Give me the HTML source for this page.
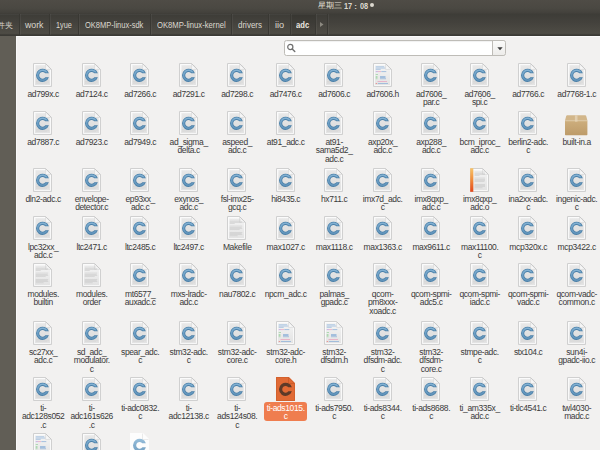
<!DOCTYPE html>
<html><head><meta charset="utf-8"><style>
html,body{margin:0;padding:0;}
body{width:600px;height:450px;overflow:hidden;position:relative;background:#f2f1f0;font-family:"Liberation Sans",sans-serif;}
#top{position:absolute;left:0;top:0;width:600px;height:14px;background:linear-gradient(#4f4c46,#4a4842 60%,#43413c 90%,#3e3d38);}
.ck{position:absolute;color:#dcd8cf;white-space:nowrap;line-height:11px;font-weight:bold;transform-origin:0 0}
#dot{position:absolute;left:369.7px;top:2.9px;width:4.5px;height:4.5px;border-radius:50%;background:#dcd8cf}
#hdr{position:absolute;left:0;top:14px;width:600px;height:22px;background:linear-gradient(#3d3c37,#44423d 40%,#4e4c45 88%,#3b3a35 95%,#3b3a35);}
.sp{position:absolute;top:14px;height:20.5px;width:1px;background:#393833}
.sl{position:absolute;top:14px;height:20.5px;width:1px;background:rgba(255,255,255,0.05)}
.bt{position:absolute;top:19.7px;line-height:11px;font-size:8.2px;color:#dcd8cf;white-space:nowrap;transform-origin:0 0;}
#side{position:absolute;left:0;top:36px;width:15.5px;height:414px;background:#615e56;}
#sideb{position:absolute;left:16px;top:36px;width:1px;height:414px;background:#f8f8f8;}
#content{position:absolute;left:16px;top:36px;width:584px;height:414px;background:#f2f1f0;}
#search{position:absolute;left:284.2px;top:39.8px;width:221.3px;height:16.6px;box-sizing:border-box;border:1px solid #bebcb7;border-radius:2.5px;background:#fff;box-shadow:inset 0 1px 1px rgba(0,0,0,0.06)}
#drop{position:absolute;left:491.5px;top:39.8px;width:14px;height:16.6px;box-sizing:border-box;border:1px solid #bebcb7;border-radius:0 2.5px 2.5px 0;background:linear-gradient(#fbfbfa,#edecea);}
.ic{position:absolute;width:19px;height:24px;}
.ic svg{display:block}
.lb{position:absolute;width:60px;text-align:center;font-size:8.5px;line-height:8.7px;color:#3a3a3a;white-space:nowrap;letter-spacing:-0.38px}
.lb .sel{display:inline-block;color:#fff;background:#ef7d4f;border-radius:3px;padding:2.05px 2.5px 0 2.5px;margin-top:-2.05px}
</style></head><body>

<svg width="0" height="0" style="position:absolute">
<defs>
 <linearGradient id="pg" x1="0" y1="0" x2="0" y2="1">
  <stop offset="0" stop-color="#f5f5f5"/><stop offset="1" stop-color="#e2e2e2"/>
 </linearGradient>
 <linearGradient id="pin" x1="0" y1="0" x2="0" y2="1">
  <stop offset="0" stop-color="#e8e8e8"/><stop offset="1" stop-color="#dcdcdc"/>
 </linearGradient>
 <linearGradient id="cg" x1="0" y1="0" x2="0" y2="1">
  <stop offset="0" stop-color="#86b4d5"/><stop offset="0.5" stop-color="#6d9fc5"/><stop offset="1" stop-color="#6093ba"/>
 </linearGradient>
 <linearGradient id="og" x1="0" y1="0" x2="0" y2="1">
  <stop offset="0" stop-color="#f7c46a"/><stop offset="0.5" stop-color="#f08a3a"/><stop offset="1" stop-color="#e4461a"/>
 </linearGradient>
 <linearGradient id="bx" x1="0" y1="0" x2="0" y2="1">
  <stop offset="0" stop-color="#cdae7d"/><stop offset="1" stop-color="#bd9b69"/>
 </linearGradient>
 <g id="page">
  <path d="M0.5,0.5 H12.5 L18.5,6.5 V23.5 H0.5 Z" fill="url(#pg)" stroke="#d0d0d0" stroke-width="1"/>
  <path d="M1.5,1.5 H12 L17.5,7 V22.5 H1.5 Z" fill="none" stroke="#fdfdfd" stroke-width="0.8"/>
  <path d="M12.5,0.5 V6.5 H18.5 Z" fill="#f0f0f0" stroke="#dedede" stroke-width="0.8"/><path d="M12.5,0.5 L18.5,6.5" stroke="#c6c6c6" stroke-width="0.9"/><path d="M13.6,3.2 L15.5,5.4 H13.6 Z" fill="#fcfcfc"/>
 </g>
 <g id="cic">
  <use href="#page"/>
  <rect x="2.8" y="2.3" width="13.5" height="18.2" fill="url(#pin)"/>
  <path d="M12.5,0.5 V6.5 H18.5 Z" fill="#f0f0f0" stroke="#dedede" stroke-width="0.8"/><path d="M12.5,0.5 L18.5,6.5" stroke="#c6c6c6" stroke-width="0.9"/><path d="M13.6,3.2 L15.5,5.4 H13.6 Z" fill="#fcfcfc"/>
  <g stroke="#d2d2d2" stroke-width="0.5"><path d="M3,16.5 H14 M3,18.5 H13 M3,20.3 H14"/></g>
  <path d="M15.89,10.30 A6.6,6.6 0 1 0 15.89,14.30 L12.35,14.30 A3.4,3.4 0 1 1 12.35,10.30 Z" fill="#497fa8"/><path d="M14.73,9.60 A5.8,5.8 0 1 0 14.73,15.00 L12.82,15.00 A4.2,4.2 0 1 1 12.82,9.60 Z" fill="url(#cg)"/>
 </g>
</defs>
</svg>
<div id="top"></div>
<div class="ck" style="left:317.8px;top:0.4px;font-size:7.6px;font-weight:500;color:#e6e2d9">星期三</div><div class="ck" style="left:343.7px;top:0.8px;font-size:8.4px;transform:scaleX(0.88)">17</div><div class="ck" style="left:354.3px;top:0.6px;font-size:8px">:</div><div class="ck" style="left:359.5px;top:0.8px;font-size:8.4px;transform:scaleX(0.88)">08</div><div id="dot"></div>
<div id="hdr"></div>
<div style="position:absolute;left:290.6px;top:14px;width:24.8px;height:20.5px;background:rgba(0,0,0,0.09)"></div>
<div style="position:absolute;left:0;top:14px;width:327.5px;height:1px;background:rgba(255,255,255,0.035)"></div>
<div class="sp" style="left:18.8px"></div><div class="sl" style="left:19.8px"></div>
<div class="sp" style="left:49.1px"></div><div class="sl" style="left:50.1px"></div>
<div class="sp" style="left:77.5px"></div><div class="sl" style="left:78.5px"></div>
<div class="sp" style="left:149.9px"></div><div class="sl" style="left:150.9px"></div>
<div class="sp" style="left:230.9px"></div><div class="sl" style="left:231.9px"></div>
<div class="sp" style="left:268.1px"></div><div class="sl" style="left:269.1px"></div>
<div class="sp" style="left:290.1px"></div><div class="sl" style="left:291.1px"></div>
<div class="sp" style="left:314.9px"></div><div class="sl" style="left:315.9px"></div>
<div class="sp" style="left:326.5px"></div><div class="sl" style="left:327.5px"></div>
<div class="bt" style="left:-3.5px;top:20.1px;color:#d4d0c7">件夹</div>
<div class="bt" style="left:25px;transform:scaleX(1.07)">work</div>
<div class="bt" style="left:56px;transform:scaleX(0.89)">1yue</div>
<div class="bt" style="left:85px;transform:scaleX(0.916)">OK8MP-linux-sdk</div>
<div class="bt" style="left:156.6px;transform:scaleX(0.937)">OK8MP-linux-kernel</div>
<div class="bt" style="left:238px;transform:scaleX(0.976)">drivers</div>
<div class="bt" style="left:274.6px;transform:scaleX(1.12)">iio</div>
<div class="bt" style="left:296px;transform:scaleX(0.93);font-weight:bold;color:#eeeae2">adc</div>
<svg style="position:absolute;left:320px;top:21.5px" width="4" height="5" viewBox="0 0 4 5"><path d="M0,0 L3.5,2.5 L0,5 Z" fill="#8c8980"/></svg>
<div id="side"></div>
<div id="content"></div><div id="sideb"></div><div style="position:absolute;left:16px;top:36px;width:584px;height:1px;background:#fbfbfb"></div>
<div id="search"></div>
<div id="drop"></div>
<svg style="position:absolute;left:286px;top:43px" width="10" height="10" viewBox="0 0 10 10"><circle cx="4.3" cy="4" r="2.6" fill="none" stroke="#707070" stroke-width="1.2"/><path d="M6.2,6 L8.8,8.6" stroke="#707070" stroke-width="1.4" stroke-linecap="round"/></svg>
<svg style="position:absolute;left:496.5px;top:46.5px" width="6" height="4" viewBox="0 0 6 4"><path d="M0.3,0.3 H5.7 L3,3.3 Z" fill="#3c3c3c"/></svg>
<div class="ic" style="left:33.40px;top:63px"><svg width="19" height="24" viewBox="0 0 19 24"><use href="#cic"/></svg></div><div class="lb" style="left:13.20px;top:89.75px">ad799x.c</div><div class="ic" style="left:81.90px;top:63px"><svg width="19" height="24" viewBox="0 0 19 24"><use href="#cic"/></svg></div><div class="lb" style="left:61.70px;top:89.75px">ad7124.c</div><div class="ic" style="left:130.40px;top:63px"><svg width="19" height="24" viewBox="0 0 19 24"><use href="#cic"/></svg></div><div class="lb" style="left:110.20px;top:89.75px">ad7266.c</div><div class="ic" style="left:178.90px;top:63px"><svg width="19" height="24" viewBox="0 0 19 24"><use href="#cic"/></svg></div><div class="lb" style="left:158.70px;top:89.75px">ad7291.c</div><div class="ic" style="left:227.40px;top:63px"><svg width="19" height="24" viewBox="0 0 19 24"><use href="#cic"/></svg></div><div class="lb" style="left:207.20px;top:89.75px">ad7298.c</div><div class="ic" style="left:275.90px;top:63px"><svg width="19" height="24" viewBox="0 0 19 24"><use href="#cic"/></svg></div><div class="lb" style="left:255.70px;top:89.75px">ad7476.c</div><div class="ic" style="left:324.40px;top:63px"><svg width="19" height="24" viewBox="0 0 19 24"><use href="#cic"/></svg></div><div class="lb" style="left:304.20px;top:89.75px">ad7606.c</div><div class="ic" style="left:372.90px;top:63px"><svg width="19" height="24" viewBox="0 0 19 24"><use href="#page"/><rect x="2.7" y="3.5" width="8.5" height="0.65" fill="#8fb3da"/><rect x="2.7" y="4.7" width="9.5" height="0.65" fill="#8fb3da"/><rect x="2.7" y="5.9" width="5" height="0.65" fill="#8fb3da"/><rect x="2.7" y="8.4" width="2.2" height="0.65" fill="#b894dc"/><rect x="5" y="8.4" width="3" height="0.65" fill="#e99ab8"/><rect x="8.3" y="8.4" width="5" height="0.65" fill="#7ea8d6"/><rect x="2.7" y="11.1" width="2.3" height="0.65" fill="#8fd093"/><rect x="2.7" y="13.1" width="1.8" height="0.65" fill="#8fd093"/><rect x="7" y="13.1" width="5.5" height="0.65" fill="#7ea8d6"/><rect x="2.7" y="14.3" width="1.8" height="0.65" fill="#8fd093"/><rect x="7" y="14.3" width="5.5" height="0.65" fill="#7ea8d6"/><rect x="2.7" y="15.5" width="1.8" height="0.65" fill="#8fd093"/><rect x="7" y="15.5" width="6" height="0.65" fill="#7ea8d6"/><rect x="4.5" y="18" width="9.5" height="0.65" fill="#e99ab8"/><rect x="2.7" y="20.2" width="1.5" height="0.65" fill="#e86a6a"/><rect x="5" y="20.2" width="10" height="0.65" fill="#7ea8d6"/></svg></div><div class="lb" style="left:352.70px;top:89.75px">ad7606.h</div><div class="ic" style="left:421.40px;top:63px"><svg width="19" height="24" viewBox="0 0 19 24"><use href="#cic"/></svg></div><div class="lb" style="left:401.20px;top:89.75px">ad7606_<br>par.c</div><div class="ic" style="left:469.90px;top:63px"><svg width="19" height="24" viewBox="0 0 19 24"><use href="#cic"/></svg></div><div class="lb" style="left:449.70px;top:89.75px">ad7606_<br>spi.c</div><div class="ic" style="left:518.40px;top:63px"><svg width="19" height="24" viewBox="0 0 19 24"><use href="#cic"/></svg></div><div class="lb" style="left:498.20px;top:89.75px">ad7766.c</div><div class="ic" style="left:566.90px;top:63px"><svg width="19" height="24" viewBox="0 0 19 24"><use href="#cic"/></svg></div><div class="lb" style="left:546.70px;top:89.75px">ad7768-1.c</div><div class="ic" style="left:33.40px;top:111px"><svg width="19" height="24" viewBox="0 0 19 24"><use href="#cic"/></svg></div><div class="lb" style="left:13.20px;top:137.75px">ad7887.c</div><div class="ic" style="left:81.90px;top:111px"><svg width="19" height="24" viewBox="0 0 19 24"><use href="#cic"/></svg></div><div class="lb" style="left:61.70px;top:137.75px">ad7923.c</div><div class="ic" style="left:130.40px;top:111px"><svg width="19" height="24" viewBox="0 0 19 24"><use href="#cic"/></svg></div><div class="lb" style="left:110.20px;top:137.75px">ad7949.c</div><div class="ic" style="left:178.90px;top:111px"><svg width="19" height="24" viewBox="0 0 19 24"><use href="#cic"/></svg></div><div class="lb" style="left:158.70px;top:137.75px">ad_sigma_<br>delta.c</div><div class="ic" style="left:227.40px;top:111px"><svg width="19" height="24" viewBox="0 0 19 24"><use href="#cic"/></svg></div><div class="lb" style="left:207.20px;top:137.75px">aspeed_<br>adc.c</div><div class="ic" style="left:275.90px;top:111px"><svg width="19" height="24" viewBox="0 0 19 24"><use href="#cic"/></svg></div><div class="lb" style="left:255.70px;top:137.75px">at91_adc.c</div><div class="ic" style="left:324.40px;top:111px"><svg width="19" height="24" viewBox="0 0 19 24"><use href="#cic"/></svg></div><div class="lb" style="left:304.20px;top:137.75px">at91-<br>sama5d2_<br>adc.c</div><div class="ic" style="left:372.90px;top:111px"><svg width="19" height="24" viewBox="0 0 19 24"><use href="#cic"/></svg></div><div class="lb" style="left:352.70px;top:137.75px">axp20x_<br>adc.c</div><div class="ic" style="left:421.40px;top:111px"><svg width="19" height="24" viewBox="0 0 19 24"><use href="#cic"/></svg></div><div class="lb" style="left:401.20px;top:137.75px">axp288_<br>adc.c</div><div class="ic" style="left:469.90px;top:111px"><svg width="19" height="24" viewBox="0 0 19 24"><use href="#cic"/></svg></div><div class="lb" style="left:449.70px;top:137.75px">bcm_iproc_<br>adc.c</div><div class="ic" style="left:518.40px;top:111px"><svg width="19" height="24" viewBox="0 0 19 24"><use href="#cic"/></svg></div><div class="lb" style="left:498.20px;top:137.75px">berlin2-adc.<br>c</div><div class="ic" style="left:566.90px;top:111px"><svg width="23" height="21" viewBox="0 0 23 21" style="margin-left:-1.9px;margin-top:4.3px"><path d="M0,5.6 H22.4 V19.6 Q22.4,20.2 21.8,20.2 H0.6 Q0,20.2 0,19.6 Z" fill="url(#bx)"/><path d="M2.2,0.2 H20.2 Q20.9,0.2 21.2,0.9 L22.4,5.6 H0 L1.2,0.9 Q1.5,0.2 2.2,0.2 Z" fill="#d2b68a"/><path d="M0.3,5.9 H22.1" stroke="#e1cca6" stroke-width="0.7"/><rect x="9.9" y="0.2" width="2.6" height="6.5" fill="#e6d5b6" opacity="0.8"/></svg></div><div class="lb" style="left:546.70px;top:137.75px">built-in.a</div><div class="ic" style="left:33.40px;top:168px"><svg width="19" height="24" viewBox="0 0 19 24"><use href="#cic"/></svg></div><div class="lb" style="left:13.20px;top:194.75px">dln2-adc.c</div><div class="ic" style="left:81.90px;top:168px"><svg width="19" height="24" viewBox="0 0 19 24"><use href="#cic"/></svg></div><div class="lb" style="left:61.70px;top:194.75px">envelope-<br>detector.c</div><div class="ic" style="left:130.40px;top:168px"><svg width="19" height="24" viewBox="0 0 19 24"><use href="#cic"/></svg></div><div class="lb" style="left:110.20px;top:194.75px">ep93xx_<br>adc.c</div><div class="ic" style="left:178.90px;top:168px"><svg width="19" height="24" viewBox="0 0 19 24"><use href="#cic"/></svg></div><div class="lb" style="left:158.70px;top:194.75px">exynos_<br>adc.c</div><div class="ic" style="left:227.40px;top:168px"><svg width="19" height="24" viewBox="0 0 19 24"><use href="#cic"/></svg></div><div class="lb" style="left:207.20px;top:194.75px">fsl-imx25-<br>gcq.c</div><div class="ic" style="left:275.90px;top:168px"><svg width="19" height="24" viewBox="0 0 19 24"><use href="#cic"/></svg></div><div class="lb" style="left:255.70px;top:194.75px">hi8435.c</div><div class="ic" style="left:324.40px;top:168px"><svg width="19" height="24" viewBox="0 0 19 24"><use href="#cic"/></svg></div><div class="lb" style="left:304.20px;top:194.75px">hx711.c</div><div class="ic" style="left:372.90px;top:168px"><svg width="19" height="24" viewBox="0 0 19 24"><use href="#cic"/></svg></div><div class="lb" style="left:352.70px;top:194.75px">imx7d_adc.<br>c</div><div class="ic" style="left:421.40px;top:168px"><svg width="19" height="24" viewBox="0 0 19 24"><use href="#cic"/></svg></div><div class="lb" style="left:401.20px;top:194.75px">imx8qxp_<br>adc.c</div><div class="ic" style="left:469.90px;top:168px"><svg width="19" height="24" viewBox="0 0 19 24"><use href="#page"/><rect x="4.5" y="3.8" width="10.5" height="0.5" fill="#c4c4c4"/><rect x="4.5" y="5.0" width="10.5" height="0.5" fill="#c4c4c4"/><rect x="4.5" y="6.2" width="10.5" height="0.5" fill="#c4c4c4"/><rect x="4.5" y="7.4" width="5" height="0.5" fill="#c4c4c4"/><rect x="4.5" y="9.8" width="10.5" height="0.5" fill="#c4c4c4"/><rect x="4.5" y="11.0" width="10.5" height="0.5" fill="#c4c4c4"/><rect x="4.5" y="12.2" width="10.5" height="0.5" fill="#c4c4c4"/><rect x="4.5" y="13.4" width="10" height="0.5" fill="#c4c4c4"/><rect x="4.5" y="16.0" width="10.5" height="0.5" fill="#c4c4c4"/><rect x="4.5" y="17.2" width="10.5" height="0.5" fill="#c4c4c4"/><rect x="4.5" y="18.4" width="10.5" height="0.5" fill="#c4c4c4"/><rect x="4.5" y="19.6" width="8" height="0.5" fill="#c4c4c4"/><rect x="0.2" y="0.2" width="3.1" height="23.6" fill="url(#og)"/></svg></div><div class="lb" style="left:449.70px;top:194.75px">imx8qxp_<br>adc.o</div><div class="ic" style="left:518.40px;top:168px"><svg width="19" height="24" viewBox="0 0 19 24"><use href="#cic"/></svg></div><div class="lb" style="left:498.20px;top:194.75px">ina2xx-adc.<br>c</div><div class="ic" style="left:566.90px;top:168px"><svg width="19" height="24" viewBox="0 0 19 24"><use href="#cic"/></svg></div><div class="lb" style="left:546.70px;top:194.75px">ingenic-adc.<br>c</div><div class="ic" style="left:33.40px;top:216px"><svg width="19" height="24" viewBox="0 0 19 24"><use href="#cic"/></svg></div><div class="lb" style="left:13.20px;top:242.75px">lpc32xx_<br>adc.c</div><div class="ic" style="left:81.90px;top:216px"><svg width="19" height="24" viewBox="0 0 19 24"><use href="#cic"/></svg></div><div class="lb" style="left:61.70px;top:242.75px">ltc2471.c</div><div class="ic" style="left:130.40px;top:216px"><svg width="19" height="24" viewBox="0 0 19 24"><use href="#cic"/></svg></div><div class="lb" style="left:110.20px;top:242.75px">ltc2485.c</div><div class="ic" style="left:178.90px;top:216px"><svg width="19" height="24" viewBox="0 0 19 24"><use href="#cic"/></svg></div><div class="lb" style="left:158.70px;top:242.75px">ltc2497.c</div><div class="ic" style="left:227.40px;top:216px"><svg width="19" height="24" viewBox="0 0 19 24"><use href="#page"/><rect x="2.7" y="3.8" width="11.5" height="0.5" fill="#c4c4c4"/><rect x="2.7" y="5.0" width="12.5" height="0.5" fill="#c4c4c4"/><rect x="2.7" y="6.2" width="12" height="0.5" fill="#c4c4c4"/><rect x="2.7" y="7.4" width="5" height="0.5" fill="#c4c4c4"/><rect x="2.7" y="9.8" width="12.5" height="0.5" fill="#c4c4c4"/><rect x="2.7" y="11.0" width="12" height="0.5" fill="#c4c4c4"/><rect x="2.7" y="12.2" width="12.5" height="0.5" fill="#c4c4c4"/><rect x="2.7" y="13.4" width="10" height="0.5" fill="#c4c4c4"/><rect x="2.7" y="16.0" width="12.5" height="0.5" fill="#c4c4c4"/><rect x="2.7" y="17.2" width="12" height="0.5" fill="#c4c4c4"/><rect x="2.7" y="18.4" width="12.5" height="0.5" fill="#c4c4c4"/><rect x="2.7" y="19.6" width="8" height="0.5" fill="#c4c4c4"/></svg></div><div class="lb" style="left:207.20px;top:242.75px">Makefile</div><div class="ic" style="left:275.90px;top:216px"><svg width="19" height="24" viewBox="0 0 19 24"><use href="#cic"/></svg></div><div class="lb" style="left:255.70px;top:242.75px">max1027.c</div><div class="ic" style="left:324.40px;top:216px"><svg width="19" height="24" viewBox="0 0 19 24"><use href="#cic"/></svg></div><div class="lb" style="left:304.20px;top:242.75px">max1118.c</div><div class="ic" style="left:372.90px;top:216px"><svg width="19" height="24" viewBox="0 0 19 24"><use href="#cic"/></svg></div><div class="lb" style="left:352.70px;top:242.75px">max1363.c</div><div class="ic" style="left:421.40px;top:216px"><svg width="19" height="24" viewBox="0 0 19 24"><use href="#cic"/></svg></div><div class="lb" style="left:401.20px;top:242.75px">max9611.c</div><div class="ic" style="left:469.90px;top:216px"><svg width="19" height="24" viewBox="0 0 19 24"><use href="#cic"/></svg></div><div class="lb" style="left:449.70px;top:242.75px">max11100.<br>c</div><div class="ic" style="left:518.40px;top:216px"><svg width="19" height="24" viewBox="0 0 19 24"><use href="#cic"/></svg></div><div class="lb" style="left:498.20px;top:242.75px">mcp320x.c</div><div class="ic" style="left:566.90px;top:216px"><svg width="19" height="24" viewBox="0 0 19 24"><use href="#cic"/></svg></div><div class="lb" style="left:546.70px;top:242.75px">mcp3422.c</div><div class="ic" style="left:33.40px;top:263px"><svg width="19" height="24" viewBox="0 0 19 24"><use href="#page"/><rect x="2.7" y="3.8" width="11.5" height="0.5" fill="#c4c4c4"/><rect x="2.7" y="5.0" width="12.5" height="0.5" fill="#c4c4c4"/><rect x="2.7" y="6.2" width="12" height="0.5" fill="#c4c4c4"/><rect x="2.7" y="7.4" width="5" height="0.5" fill="#c4c4c4"/><rect x="2.7" y="9.8" width="12.5" height="0.5" fill="#c4c4c4"/><rect x="2.7" y="11.0" width="12" height="0.5" fill="#c4c4c4"/><rect x="2.7" y="12.2" width="12.5" height="0.5" fill="#c4c4c4"/><rect x="2.7" y="13.4" width="10" height="0.5" fill="#c4c4c4"/><rect x="2.7" y="16.0" width="12.5" height="0.5" fill="#c4c4c4"/><rect x="2.7" y="17.2" width="12" height="0.5" fill="#c4c4c4"/><rect x="2.7" y="18.4" width="12.5" height="0.5" fill="#c4c4c4"/><rect x="2.7" y="19.6" width="8" height="0.5" fill="#c4c4c4"/></svg></div><div class="lb" style="left:13.20px;top:289.75px">modules.<br>builtin</div><div class="ic" style="left:81.90px;top:263px"><svg width="19" height="24" viewBox="0 0 19 24"><use href="#page"/><rect x="2.7" y="3.8" width="11.5" height="0.5" fill="#c4c4c4"/><rect x="2.7" y="5.0" width="12.5" height="0.5" fill="#c4c4c4"/><rect x="2.7" y="6.2" width="12" height="0.5" fill="#c4c4c4"/><rect x="2.7" y="7.4" width="5" height="0.5" fill="#c4c4c4"/><rect x="2.7" y="9.8" width="12.5" height="0.5" fill="#c4c4c4"/><rect x="2.7" y="11.0" width="12" height="0.5" fill="#c4c4c4"/><rect x="2.7" y="12.2" width="12.5" height="0.5" fill="#c4c4c4"/><rect x="2.7" y="13.4" width="10" height="0.5" fill="#c4c4c4"/><rect x="2.7" y="16.0" width="12.5" height="0.5" fill="#c4c4c4"/><rect x="2.7" y="17.2" width="12" height="0.5" fill="#c4c4c4"/><rect x="2.7" y="18.4" width="12.5" height="0.5" fill="#c4c4c4"/><rect x="2.7" y="19.6" width="8" height="0.5" fill="#c4c4c4"/></svg></div><div class="lb" style="left:61.70px;top:289.75px">modules.<br>order</div><div class="ic" style="left:130.40px;top:263px"><svg width="19" height="24" viewBox="0 0 19 24"><use href="#cic"/></svg></div><div class="lb" style="left:110.20px;top:289.75px">mt6577_<br>auxadc.c</div><div class="ic" style="left:178.90px;top:263px"><svg width="19" height="24" viewBox="0 0 19 24"><use href="#cic"/></svg></div><div class="lb" style="left:158.70px;top:289.75px">mxs-lradc-<br>adc.c</div><div class="ic" style="left:227.40px;top:263px"><svg width="19" height="24" viewBox="0 0 19 24"><use href="#cic"/></svg></div><div class="lb" style="left:207.20px;top:289.75px">nau7802.c</div><div class="ic" style="left:275.90px;top:263px"><svg width="19" height="24" viewBox="0 0 19 24"><use href="#cic"/></svg></div><div class="lb" style="left:255.70px;top:289.75px">npcm_adc.c</div><div class="ic" style="left:324.40px;top:263px"><svg width="19" height="24" viewBox="0 0 19 24"><use href="#cic"/></svg></div><div class="lb" style="left:304.20px;top:289.75px">palmas_<br>gpadc.c</div><div class="ic" style="left:372.90px;top:263px"><svg width="19" height="24" viewBox="0 0 19 24"><use href="#cic"/></svg></div><div class="lb" style="left:352.70px;top:289.75px">qcom-<br>pm8xxx-<br>xoadc.c</div><div class="ic" style="left:421.40px;top:263px"><svg width="19" height="24" viewBox="0 0 19 24"><use href="#cic"/></svg></div><div class="lb" style="left:401.20px;top:289.75px">qcom-spmi-<br>adc5.c</div><div class="ic" style="left:469.90px;top:263px"><svg width="19" height="24" viewBox="0 0 19 24"><use href="#cic"/></svg></div><div class="lb" style="left:449.70px;top:289.75px">qcom-spmi-<br>iadc.c</div><div class="ic" style="left:518.40px;top:263px"><svg width="19" height="24" viewBox="0 0 19 24"><use href="#cic"/></svg></div><div class="lb" style="left:498.20px;top:289.75px">qcom-spmi-<br>vadc.c</div><div class="ic" style="left:566.90px;top:263px"><svg width="19" height="24" viewBox="0 0 19 24"><use href="#cic"/></svg></div><div class="lb" style="left:546.70px;top:289.75px">qcom-vadc-<br>common.c</div><div class="ic" style="left:33.40px;top:321px"><svg width="19" height="24" viewBox="0 0 19 24"><use href="#cic"/></svg></div><div class="lb" style="left:13.20px;top:347.75px">sc27xx_<br>adc.c</div><div class="ic" style="left:81.90px;top:321px"><svg width="19" height="24" viewBox="0 0 19 24"><use href="#cic"/></svg></div><div class="lb" style="left:61.70px;top:347.75px">sd_adc_<br>modulator.<br>c</div><div class="ic" style="left:130.40px;top:321px"><svg width="19" height="24" viewBox="0 0 19 24"><use href="#cic"/></svg></div><div class="lb" style="left:110.20px;top:347.75px">spear_adc.<br>c</div><div class="ic" style="left:178.90px;top:321px"><svg width="19" height="24" viewBox="0 0 19 24"><use href="#cic"/></svg></div><div class="lb" style="left:158.70px;top:347.75px">stm32-adc.<br>c</div><div class="ic" style="left:227.40px;top:321px"><svg width="19" height="24" viewBox="0 0 19 24"><use href="#cic"/></svg></div><div class="lb" style="left:207.20px;top:347.75px">stm32-adc-<br>core.c</div><div class="ic" style="left:275.90px;top:321px"><svg width="19" height="24" viewBox="0 0 19 24"><use href="#page"/><rect x="2.7" y="3.5" width="8.5" height="0.65" fill="#8fb3da"/><rect x="2.7" y="4.7" width="9.5" height="0.65" fill="#8fb3da"/><rect x="2.7" y="5.9" width="5" height="0.65" fill="#8fb3da"/><rect x="2.7" y="8.4" width="2.2" height="0.65" fill="#b894dc"/><rect x="5" y="8.4" width="3" height="0.65" fill="#e99ab8"/><rect x="8.3" y="8.4" width="5" height="0.65" fill="#7ea8d6"/><rect x="2.7" y="11.1" width="2.3" height="0.65" fill="#8fd093"/><rect x="2.7" y="13.1" width="1.8" height="0.65" fill="#8fd093"/><rect x="7" y="13.1" width="5.5" height="0.65" fill="#7ea8d6"/><rect x="2.7" y="14.3" width="1.8" height="0.65" fill="#8fd093"/><rect x="7" y="14.3" width="5.5" height="0.65" fill="#7ea8d6"/><rect x="2.7" y="15.5" width="1.8" height="0.65" fill="#8fd093"/><rect x="7" y="15.5" width="6" height="0.65" fill="#7ea8d6"/><rect x="4.5" y="18" width="9.5" height="0.65" fill="#e99ab8"/><rect x="2.7" y="20.2" width="1.5" height="0.65" fill="#e86a6a"/><rect x="5" y="20.2" width="10" height="0.65" fill="#7ea8d6"/></svg></div><div class="lb" style="left:255.70px;top:347.75px">stm32-adc-<br>core.h</div><div class="ic" style="left:324.40px;top:321px"><svg width="19" height="24" viewBox="0 0 19 24"><use href="#page"/><rect x="2.7" y="3.5" width="8.5" height="0.65" fill="#8fb3da"/><rect x="2.7" y="4.7" width="9.5" height="0.65" fill="#8fb3da"/><rect x="2.7" y="5.9" width="5" height="0.65" fill="#8fb3da"/><rect x="2.7" y="8.4" width="2.2" height="0.65" fill="#b894dc"/><rect x="5" y="8.4" width="3" height="0.65" fill="#e99ab8"/><rect x="8.3" y="8.4" width="5" height="0.65" fill="#7ea8d6"/><rect x="2.7" y="11.1" width="2.3" height="0.65" fill="#8fd093"/><rect x="2.7" y="13.1" width="1.8" height="0.65" fill="#8fd093"/><rect x="7" y="13.1" width="5.5" height="0.65" fill="#7ea8d6"/><rect x="2.7" y="14.3" width="1.8" height="0.65" fill="#8fd093"/><rect x="7" y="14.3" width="5.5" height="0.65" fill="#7ea8d6"/><rect x="2.7" y="15.5" width="1.8" height="0.65" fill="#8fd093"/><rect x="7" y="15.5" width="6" height="0.65" fill="#7ea8d6"/><rect x="4.5" y="18" width="9.5" height="0.65" fill="#e99ab8"/><rect x="2.7" y="20.2" width="1.5" height="0.65" fill="#e86a6a"/><rect x="5" y="20.2" width="10" height="0.65" fill="#7ea8d6"/></svg></div><div class="lb" style="left:304.20px;top:347.75px">stm32-<br>dfsdm.h</div><div class="ic" style="left:372.90px;top:321px"><svg width="19" height="24" viewBox="0 0 19 24"><use href="#cic"/></svg></div><div class="lb" style="left:352.70px;top:347.75px">stm32-<br>dfsdm-adc.<br>c</div><div class="ic" style="left:421.40px;top:321px"><svg width="19" height="24" viewBox="0 0 19 24"><use href="#cic"/></svg></div><div class="lb" style="left:401.20px;top:347.75px">stm32-<br>dfsdm-<br>core.c</div><div class="ic" style="left:469.90px;top:321px"><svg width="19" height="24" viewBox="0 0 19 24"><use href="#cic"/></svg></div><div class="lb" style="left:449.70px;top:347.75px">stmpe-adc.<br>c</div><div class="ic" style="left:518.40px;top:321px"><svg width="19" height="24" viewBox="0 0 19 24"><use href="#cic"/></svg></div><div class="lb" style="left:498.20px;top:347.75px">stx104.c</div><div class="ic" style="left:566.90px;top:321px"><svg width="19" height="24" viewBox="0 0 19 24"><use href="#cic"/></svg></div><div class="lb" style="left:546.70px;top:347.75px">sun4i-<br>gpadc-iio.c</div><div class="ic" style="left:33.40px;top:377px"><svg width="19" height="24" viewBox="0 0 19 24"><use href="#cic"/></svg></div><div class="lb" style="left:13.20px;top:403.75px">ti-<br>adc128s052<br>.c</div><div class="ic" style="left:81.90px;top:377px"><svg width="19" height="24" viewBox="0 0 19 24"><use href="#cic"/></svg></div><div class="lb" style="left:61.70px;top:403.75px">ti-<br>adc161s626<br>.c</div><div class="ic" style="left:130.40px;top:377px"><svg width="19" height="24" viewBox="0 0 19 24"><use href="#cic"/></svg></div><div class="lb" style="left:110.20px;top:403.75px">ti-adc0832.<br>c</div><div class="ic" style="left:178.90px;top:377px"><svg width="19" height="24" viewBox="0 0 19 24"><use href="#cic"/></svg></div><div class="lb" style="left:158.70px;top:403.75px">ti-<br>adc12138.c</div><div class="ic" style="left:227.40px;top:377px"><svg width="19" height="24" viewBox="0 0 19 24"><use href="#cic"/></svg></div><div class="lb" style="left:207.20px;top:403.75px">ti-<br>ads124s08.<br>c</div><div class="ic" style="left:275.90px;top:377px"><svg width="19" height="24" viewBox="0 0 19 24"><path d="M0,0 H13 L19,6 V24 H0 Z" fill="#e06a35"/><path d="M0.5,0.5 H12.5 L18.5,6.5 V23.5 H0.5 Z" fill="none" stroke="#cf5f2c" stroke-width="0.8"/><path d="M12.5,0.5 V6.5 H18.5" fill="none" stroke="#c95a2a" stroke-width="0.8"/><path d="M15.89,10.30 A6.6,6.6 0 1 0 15.89,14.30 L12.35,14.30 A3.4,3.4 0 1 1 12.35,10.30 Z" fill="#5d3a28"/></svg></div><div class="lb" style="left:255.70px;top:403.75px"><span class="sel">ti-ads1015.<br>c</span></div><div class="ic" style="left:324.40px;top:377px"><svg width="19" height="24" viewBox="0 0 19 24"><use href="#cic"/></svg></div><div class="lb" style="left:304.20px;top:403.75px">ti-ads7950.<br>c</div><div class="ic" style="left:372.90px;top:377px"><svg width="19" height="24" viewBox="0 0 19 24"><use href="#cic"/></svg></div><div class="lb" style="left:352.70px;top:403.75px">ti-ads8344.<br>c</div><div class="ic" style="left:421.40px;top:377px"><svg width="19" height="24" viewBox="0 0 19 24"><use href="#cic"/></svg></div><div class="lb" style="left:401.20px;top:403.75px">ti-ads8688.<br>c</div><div class="ic" style="left:469.90px;top:377px"><svg width="19" height="24" viewBox="0 0 19 24"><use href="#cic"/></svg></div><div class="lb" style="left:449.70px;top:403.75px">ti_am335x_<br>adc.c</div><div class="ic" style="left:518.40px;top:377px"><svg width="19" height="24" viewBox="0 0 19 24"><use href="#cic"/></svg></div><div class="lb" style="left:498.20px;top:403.75px">ti-tlc4541.c</div><div class="ic" style="left:566.90px;top:377px"><svg width="19" height="24" viewBox="0 0 19 24"><use href="#cic"/></svg></div><div class="lb" style="left:546.70px;top:403.75px">twl4030-<br>madc.c</div><div class="ic" style="left:33.40px;top:433px"><svg width="19" height="24" viewBox="0 0 19 24"><use href="#page"/><rect x="2.7" y="3.5" width="8.5" height="0.65" fill="#8fb3da"/><rect x="2.7" y="4.7" width="9.5" height="0.65" fill="#8fb3da"/><rect x="2.7" y="5.9" width="5" height="0.65" fill="#8fb3da"/><rect x="2.7" y="8.4" width="2.2" height="0.65" fill="#b894dc"/><rect x="5" y="8.4" width="3" height="0.65" fill="#e99ab8"/><rect x="8.3" y="8.4" width="5" height="0.65" fill="#7ea8d6"/><rect x="2.7" y="11.1" width="2.3" height="0.65" fill="#8fd093"/><rect x="2.7" y="13.1" width="1.8" height="0.65" fill="#8fd093"/><rect x="7" y="13.1" width="5.5" height="0.65" fill="#7ea8d6"/><rect x="2.7" y="14.3" width="1.8" height="0.65" fill="#8fd093"/><rect x="7" y="14.3" width="5.5" height="0.65" fill="#7ea8d6"/><rect x="2.7" y="15.5" width="1.8" height="0.65" fill="#8fd093"/><rect x="7" y="15.5" width="6" height="0.65" fill="#7ea8d6"/><rect x="4.5" y="18" width="9.5" height="0.65" fill="#e99ab8"/><rect x="2.7" y="20.2" width="1.5" height="0.65" fill="#e86a6a"/><rect x="5" y="20.2" width="10" height="0.65" fill="#7ea8d6"/></svg></div><div class="ic" style="left:81.90px;top:433px"><svg width="19" height="24" viewBox="0 0 19 24"><use href="#cic"/></svg></div><div class="ic" style="left:130.40px;top:433px"><svg width="19" height="24" viewBox="0 0 19 24"><path d="M0,0 H13 L19,6 V24 H0 Z" fill="#fdfdfd"/><path d="M12.5,0.5 V6.5 H18.5" fill="none" stroke="#e4e4e4" stroke-width="0.8"/><path d="M15.89,10.30 A6.6,6.6 0 1 0 15.89,14.30 L12.35,14.30 A3.4,3.4 0 1 1 12.35,10.30 Z" fill="url(#cg)" opacity="0.85"/></svg></div>
</body></html>
